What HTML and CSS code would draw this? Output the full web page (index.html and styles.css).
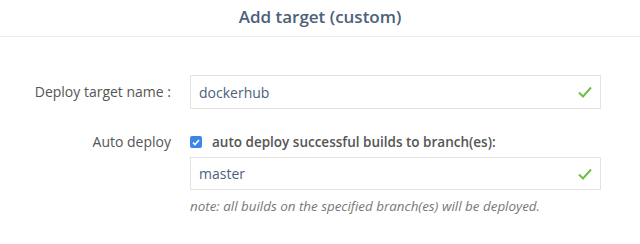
FILE: index.html
```html
<!DOCTYPE html>
<html>
<head>
<meta charset="utf-8">
<link rel="stylesheet" href="styles.css">
</head>
<body>
<header class="header">Add target (custom)</header>
<form class="form">
  <div class="row">
    <label class="label">Deploy target name :</label>
    <div class="field">
      <div class="input">
        <span class="value">dockerhub</span>
        <svg class="check" width="14" height="12" viewBox="0 0 14 12"><path d="M1 6.5 L5 10.5 L13 1.5" fill="none" stroke="#6cc04a" stroke-width="2"/></svg>
      </div>
    </div>
  </div>
  <div class="row row-auto">
    <label class="label label-auto">Auto deploy</label>
    <div class="field">
      <div class="checkline">
        <span class="box"><svg width="8" height="7" viewBox="0 0 8 7"><path d="M1 3.5 L3 5.5 L7 1" fill="none" stroke="#fff" stroke-width="1.6"/></svg></span>
        <span class="checktext">auto deploy successful builds to branch(es):</span>
      </div>
      <div class="input input-2">
        <span class="value">master</span>
        <svg class="check" width="14" height="12" viewBox="0 0 14 12"><path d="M1 6.5 L5 10.5 L13 1.5" fill="none" stroke="#6cc04a" stroke-width="2"/></svg>
      </div>
      <p class="note">note: all builds on the specified branch(es) will be deployed.</p>
    </div>
  </div>
</form>
</body>
</html>
```
FILE: styles.css
```css
* { box-sizing: border-box; }
html, body { margin: 0; padding: 0; background: #fff; }
body { font-family: "Open Sans", "Liberation Sans", sans-serif; color: #555; }
.header {
  height: 37px;
  border-bottom: 1px solid #ececec;
  text-align: center;
  font-size: 17px;
  font-weight: 600;
  color: #4d6079;
  line-height: 33px;
}
.form { padding-top: 38px; }
.row {
  display: grid;
  grid-template-columns: 171px 411px;
  column-gap: 19px;
  align-items: start;
}
.row-auto { margin-top: 25px; }
.label {
  text-align: right;
  font-size: 14px;
  color: #555;
  line-height: 34px;
}
.label-auto { line-height: 16px; margin-top: 0; }
.input {
  height: 34px;
  border: 1px solid #e3e3e3;
  display: flex;
  align-items: center;
  justify-content: space-between;
  padding: 0 8px 0 8px;
}
.value { font-size: 14px; color: #4d5f7c; }
.checkline { display: flex; align-items: center; height: 16px; }
.box {
  width: 12px; height: 12px;
  border-radius: 2px;
  background: #3b86e8;
  display: inline-flex; align-items: center; justify-content: center;
  margin-right: 10px;
}
.checktext { font-size: 13.5px; font-weight: 600; color: #555; }
.input-2 { margin-top: 7px; height: 33px; }
.note {
  margin: 7px 0 0 0;
  font-size: 13.4px;
  font-style: italic;
  color: #777;
}
```
